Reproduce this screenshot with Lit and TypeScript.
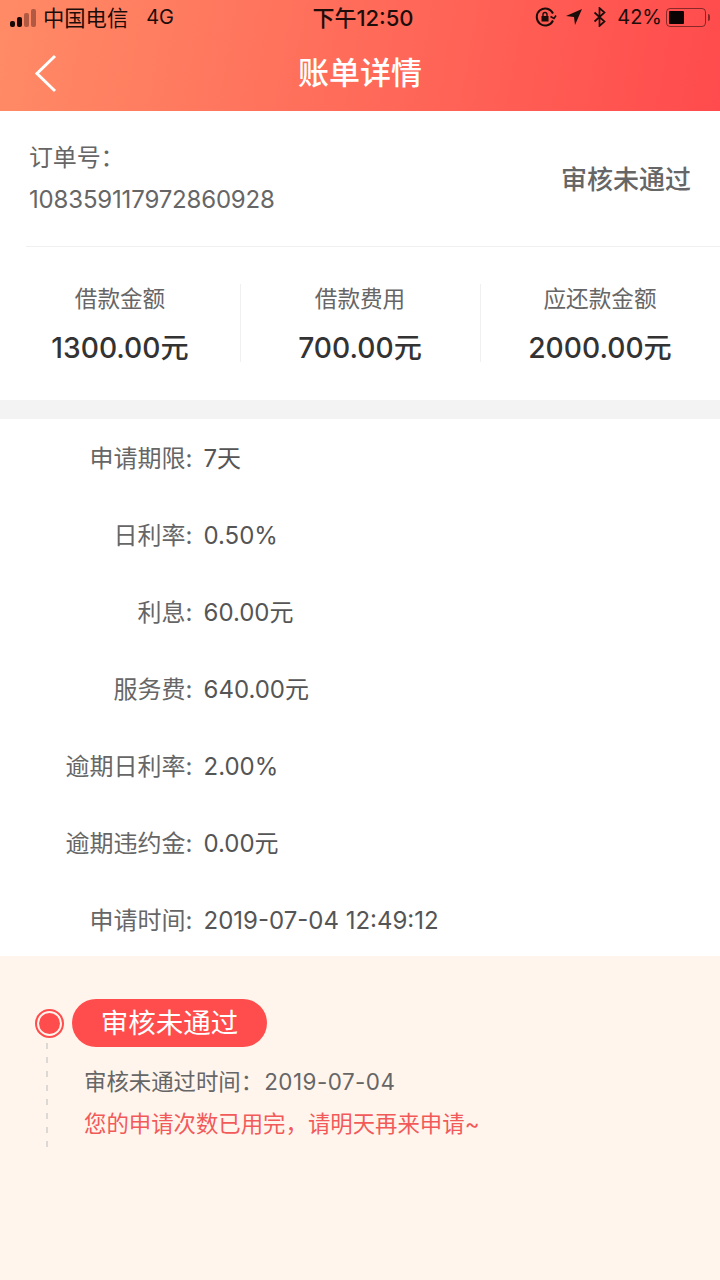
import { LitElement, html, css } from "lit";
import { customElement } from "lit/decorators.js";

const rows: [string, string][] = [
  ["申请期限:", "7天"],
  ["日利率:", "0.50%"],
  ["利息:", "60.00元"],
  ["服务费:", "640.00元"],
  ["逾期日利率:", "2.00%"],
  ["逾期违约金:", "0.00元"],
  ["申请时间:", "2019-07-04 12:49:12"],
];
const stats: [string, string][] = [
  ["借款金额", "1300.00元"],
  ["借款费用", "700.00元"],
  ["应还款金额", "2000.00元"],
];

@customElement("app-root")
export class AppRoot extends LitElement {
  static styles = css`
    :host {
      display: block;
      width: 720px;
      height: 1280px;
      overflow: hidden;
      background: #fff;
      font-family: Inter, "Noto Sans CJK SC", sans-serif;
      color: #333;
    }
    .head {
      height: 111px;
      background: linear-gradient(100deg, #ff8b66 0%, #ff4b4d 100%);
      display: flex;
      flex-direction: column;
    }
    .status {
      height: 38px;
      box-sizing: border-box;
      display: flex;
      align-items: center;
      padding: 0 10px 4px 10px;
      color: #1c0d0a;
      font-size: 21.3px;
      position: relative;
    }
    .carrier { position: relative; top: -1px; }
    .signal { display: flex; align-items: flex-end; gap: 2px; margin: 2px 7px 0 0; height: 18px; }
    .signal i { display: block; width: 5px; border-radius: 2px; background: #160807; }
    .signal i.off { background: rgba(60, 20, 15, 0.4); }
    .net { margin-left: 18px; font-size: 20px; }
    .time {
      position: absolute;
      left: 6px;
      right: 0;
      top: 4px;
      text-align: center;
      font-weight: 500;
      font-size: 22px;
      line-height: 28px;
    }
    .right { margin-left: auto; display: flex; align-items: center; gap: 10px; }
    .right .lock { margin-right: -2px; }
    .right .pct { margin: 0 -6px 0 1px; font-size: 20px; }
    .batt { display: flex; align-items: center; gap: 2px; margin-top: 1px; }
    .batt .shell {
      width: 40px; height: 19px; box-sizing: border-box; padding: 2px;
      border: 1px solid rgba(40, 10, 10, 0.55); border-radius: 4px; display: flex;
    }
    .batt .fill { width: 15px; background: #0c0404; border-radius: 1px; }
    .batt .tip { width: 2px; height: 7px; background: rgba(40, 10, 10, 0.55); border-radius: 0 2px 2px 0; }
    .nav {
      flex: 1;
      display: flex;
      align-items: center;
      justify-content: center;
      position: relative;
      padding-bottom: 9px;
      color: #fff;
      font-size: 31px;
      font-weight: 500;
    }
    .back { position: absolute; left: 33px; top: 16px; }
    .order {
      height: 135px;
      box-sizing: border-box;
      display: flex;
      align-items: center;
      justify-content: space-between;
      padding: 0 29px 0 29px;
      color: #666;
    }
    .order .l { font-size: 24px; line-height: 42px; padding-top: 1px; letter-spacing: -0.17px; }
    .order .st { font-size: 26px; font-weight: 500; color: #666; padding-bottom: 2px; }
    .line { height: 1px; margin-left: 26px; background: #f0f0f0; }
    .stats { display: flex; height: 153px; box-sizing: border-box; padding-top: 37px; }
    .stat {
      width: 240px;
      height: 78px;
      text-align: center;
      box-shadow: 1px 0 0 #f0f0f0;
    }
    .stat:last-child { box-shadow: none; }
    .stat .k { font-size: 22.6px; line-height: 30px; color: #666; }
    .stat .v { font-size: 28.2px; line-height: 40px; margin-top: 14px; font-weight: 500; color: #333; }
    .gap { height: 19px; background: #f3f3f3; }
    .rows { display: flex; flex-direction: column; gap: 37px; padding: 20px 0 15px; }
    .row { display: flex; font-size: 24px; line-height: 40px; color: #555; }
    .row .a { width: 192.5px; text-align: right; color: #666; }
    .row .b { margin-left: 11px; }
    .bottom { height: 324px; background: #fff5ed; padding: 43px 0 0 35px; box-sizing: border-box; }
    .top { display: flex; align-items: center; }
    .dot {
      width: 29px; height: 29px; box-sizing: border-box; border-radius: 50%;
      border: 2px solid #ff4d4d; padding: 2px; margin-right: 8px;
    }
    .dot i { display: block; width: 100%; height: 100%; border-radius: 50%; background: #ff4d4d; }
    .pill {
      width: 195px; height: 48px; border-radius: 24px; background: #ff4d4d; color: #fff;
      font-size: 27.5px; line-height: 48px; text-align: center;
    }
    .detail { display: flex; margin-top: -4px; }
    .dash {
      width: 2px; height: 105px; margin: 0 0 0 11px;
      background: repeating-linear-gradient(to bottom, #dcd8d4 0 6px, transparent 6px 14px);
    }
    .txt { margin-left: 36px; padding-top: 18px; font-size: 22.4px; line-height: 42px; }
    .txt .g { color: #666; }
    .txt .g span { margin-left: 1px; letter-spacing: 0.5px; }
    .txt .r { color: #f25a5a; }
  `;

  render() {
    return html`
      <div class="head">
        <div class="status">
          <div class="signal">
            <i style="height:6px"></i><i style="height:10px"></i><i class="off" style="height:14px"></i><i class="off" style="height:18px"></i>
          </div>
          <span class="carrier">中国电信</span><span class="net">4G</span>
          <div class="time">下午12:50</div>
          <div class="right">
            <svg class="lock" width="22" height="20" viewBox="0 0 22 20" fill="none" stroke="#1c0d0a" stroke-width="2">
              <path d="M18 13.5A8.5 8.5 0 1 1 18 6.5" />
              <path d="M15.5 9.5l3.5 2 2-3" stroke-width="1.6" />
              <rect x="6.500" y="9" width="7" height="5.5" fill="#1c0d0a" stroke="none" />
              <path d="M8 9V7.500a2 2 0 0 1 4 0V9" stroke-width="1.4" />
            </svg>
            <svg width="18" height="18" viewBox="0 0 18 18"><path d="M17 1L1 8l8 1 1 8z" fill="#1c0d0a" /></svg>
            <svg width="13" height="20" viewBox="0 0 12 20" fill="none" stroke="#1c0d0a" stroke-width="1.7">
              <path d="M1 5.500l10 9-5 4.500V1l5 4.500-10 9" />
            </svg>
            <span class="pct">42%</span>
            <div class="batt"><div class="shell"><div class="fill"></div></div><div class="tip"></div></div>
          </div>
        </div>
        <div class="nav">
          <svg class="back" width="24" height="40" viewBox="0 0 24 40" fill="none" stroke="#fff" stroke-width="3">
            <path d="M22 2L4 19.500 22 37" />
          </svg>
          账单详情
        </div>
      </div>
      <div class="order">
        <div class="l">订单号\uFF1A<br />108359117972860928</div>
        <div class="st">审核未通过</div>
      </div>
      <div class="line"></div>
      <div class="stats">
        ${stats.map(([k, v]) => html`<div class="stat"><div class="k">${k}</div><div class="v">${v}</div></div>`)}
      </div>
      <div class="gap"></div>
      <div class="rows">
        ${rows.map(([a, b]) => html`<div class="row"><div class="a">${a}</div><div class="b">${b}</div></div>`)}
      </div>
      <div class="bottom">
        <div class="top"><div class="dot"><i></i></div><div class="pill">审核未通过</div></div>
        <div class="detail">
          <div class="dash"></div>
          <div class="txt">
            <div class="g">审核未通过时间\uFF1A<span>2019-07-04</span></div>
            <div class="r">您的申请次数已用完\uFF0C请明天再来申请~</div>
          </div>
        </div>
      </div>
    `;
  }
}
